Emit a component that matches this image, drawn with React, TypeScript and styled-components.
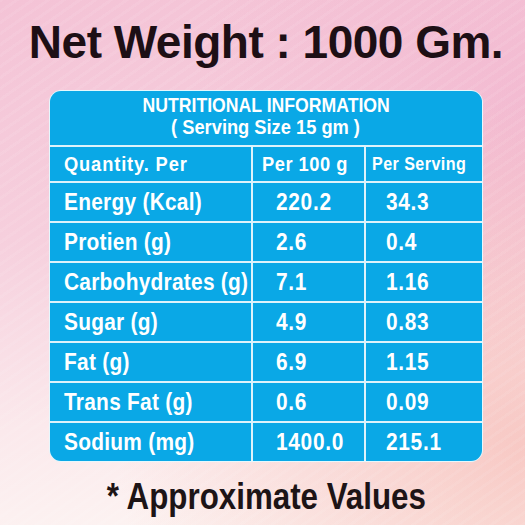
import styled, { createGlobalStyle } from "styled-components";

const rows = [
  ["Energy (Kcal)", "220.2", "34.3"],
  ["Protien (g)", "2.6", "0.4"],
  ["Carbohydrates (g)", "7.1", "1.16"],
  ["Sugar (g)", "4.9", "0.83"],
  ["Fat (g)", "6.9", "1.15"],
  ["Trans Fat (g)", "0.6", "0.09"],
  ["Sodium (mg)", "1400.0", "215.1"],
];

export default function App() {
  return (
    <>
      <GlobalStyle />
      <Page>
        <Title>Net Weight : 1000 Gm.</Title>
        <Table>
          <Heading>
            <Squeeze $x={0.84} $center>
              NUTRITIONAL INFORMATION
            </Squeeze>
            <Squeeze $x={0.87} $center>
              ( Serving Size 15 gm )
            </Squeeze>
          </Heading>
          <HeadCell $pad={14}>
            <Squeeze $x={0.87} $spacing={1}>
              Quantity. Per
            </Squeeze>
          </HeadCell>
          <HeadCell $pad={9}>
            <Squeeze $x={0.87} $spacing={0.6}>
              Per 100 g
            </Squeeze>
          </HeadCell>
          <HeadCell $pad={6} $small>
            <Squeeze $x={0.87} $spacing={0.5}>
              Per Serving
            </Squeeze>
          </HeadCell>
          {rows.map(([name, per100, perServing]) => (
            <Row key={name}>
              <Cell $pad={14}>
                <Squeeze $x={0.87} $spacing={0.3}>
                  {name}
                </Squeeze>
              </Cell>
              <Cell $pad={23}>
                <Squeeze $x={0.87} $spacing={0.8}>
                  {per100}
                </Squeeze>
              </Cell>
              <Cell $pad={20}>
                <Squeeze $x={0.87} $spacing={0.8}>
                  {perServing}
                </Squeeze>
              </Cell>
            </Row>
          ))}
        </Table>
        <Note>
          <Squeeze $x={0.87} $center>
            * Approximate Values
          </Squeeze>
        </Note>
      </Page>
    </>
  );
}

const GlobalStyle = createGlobalStyle`
  body {
    margin: 0;
  }
`;

const Page = styled.div`
  width: 525px;
  height: 525px;
  box-sizing: border-box;
  padding-left: 7px;
  display: flex;
  flex-direction: column;
  align-items: center;
  font-family: "Liberation Sans", Arial, sans-serif;
  font-weight: 700;
  background:
    repeating-linear-gradient(
      -35deg,
      rgba(255, 255, 255, 0.07) 0 3px,
      transparent 3px 9px
    ),
    radial-gradient(ellipse at 100% 85%, rgba(244, 168, 160, 0.55), transparent 55%),
    radial-gradient(ellipse at 100% 20%, rgba(240, 170, 200, 0.5), transparent 45%),
    linear-gradient(172deg, #f4c3d6 0%, #f6cfdd 40%, #fbe9ec 72%, #fdf7f4 100%);
`;

// condensed look: the installed families have no narrow cut
const Squeeze = styled.span<{ $x: number; $center?: boolean; $spacing?: number }>`
  display: inline-block;
  white-space: nowrap;
  transform: scaleX(${(p) => p.$x});
  transform-origin: ${(p) => (p.$center ? "center" : "left")} center;
  letter-spacing: ${(p) => p.$spacing ?? 0}px;
`;

const Title = styled.h1`
  margin: 0;
  height: 90px;
  font-size: 46px;
  line-height: 84px;
  color: #1d0f15;
  letter-spacing: -0.5px;
  white-space: nowrap;
`;

const Table = styled.div`
  width: 434px;
  box-sizing: border-box;
  border: 1px solid #e6f8fd;
  border-radius: 12px;
  overflow: hidden;
  background: #def3fb;
  display: grid;
  grid-template-columns: 201px 111px 1fr;
  grid-template-rows: 54px 34px repeat(7, 38px);
  gap: 2px;
  color: #ffffff;
`;

const Heading = styled.div`
  grid-column: 1 / -1;
  background: #0aa8e6;
  display: flex;
  flex-direction: column;
  align-items: center;
  font-size: 21px;
  line-height: 22px;
  padding-top: 3px;
`;

const HeadCell = styled.div<{ $pad: number; $small?: boolean }>`
  background: #0aa8e6;
  display: flex;
  align-items: center;
  padding-left: ${(p) => p.$pad}px;
  font-size: ${(p) => (p.$small ? "18.5px" : "21px")};
`;

const Row = styled.div`
  display: contents;
`;

const Cell = styled.div<{ $pad: number }>`
  background: #0aa8e6;
  display: flex;
  align-items: center;
  padding-left: ${(p) => p.$pad}px;
  font-size: 24px;
`;

const Note = styled.div`
  margin-top: 15px;
  font-size: 36px;
  line-height: 40px;
  color: #1d1416;
`;
